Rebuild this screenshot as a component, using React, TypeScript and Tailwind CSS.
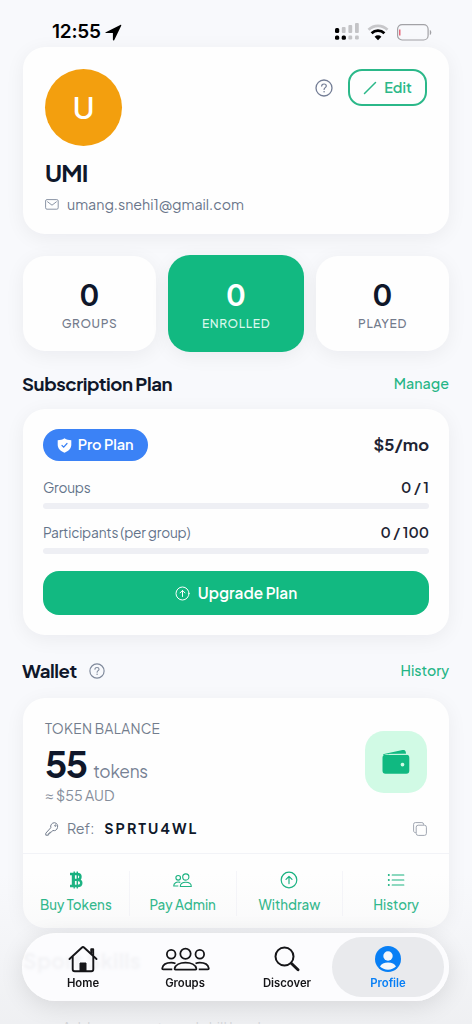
import type { ReactNode } from "react";
import { clsx } from "clsx";

type IconProps = { className?: string };

function HelpIcon({ className }: IconProps) {
  return (
    <svg viewBox="0 0 18 18" fill="none" stroke="currentColor" className={className}>
      <circle cx="9" cy="9" r="8" strokeWidth="1.3" />
      <path d="M6.7 7.1c0-1.3 1-2.1 2.3-2.1s2.3.8 2.3 2c0 1.6-2.2 1.7-2.2 3.4" strokeWidth="1.2" strokeLinecap="round" />
      <circle cx="9.1" cy="12.7" r=".8" fill="currentColor" stroke="none" />
    </svg>
  );
}

function ArrowUpCircle({ className }: IconProps) {
  return (
    <svg viewBox="0 0 18 18" fill="none" stroke="currentColor" strokeWidth="1.2" strokeLinecap="round" strokeLinejoin="round" className={className}>
      <circle cx="9" cy="9" r="7.8" />
      <path d="M9 12.6V5.4M6 8.3l3-3 3 3" />
    </svg>
  );
}

function MailIcon() {
  return (
    <svg viewBox="0 0 14 11" fill="none" stroke="currentColor" strokeWidth="1" className="h-[11px] w-[14px] text-[#8a94a5]">
      <rect x=".6" y=".6" width="12.6" height="9.6" rx="1.4" />
      <path d="M2.6 2.8 7 6.2l4.4-3.4" strokeLinecap="round" strokeLinejoin="round" />
    </svg>
  );
}

function KeyIcon() {
  return (
    <svg viewBox="0 0 14 14" fill="none" stroke="currentColor" strokeWidth="1" strokeLinejoin="round" className="size-[14px]">
      <path d="M9.5.7a3.9 3.9 0 0 0-3.7 5L.8 11.2v2h2.5v-1.5h1.5v-1.4h1.4l1.5-1.8A3.9 3.9 0 1 0 9.5.7Z" />
      <circle cx="10.4" cy="3.6" r=".7" />
    </svg>
  );
}

function CopyIcon() {
  return (
    <svg viewBox="0 0 14 14" fill="none" stroke="currentColor" strokeWidth="1" className="size-[14px]">
      <rect x="3.2" y="3.2" width="10.2" height="10.2" rx="2" />
      <path d="M10.6 3V2.3A1.7 1.7 0 0 0 8.9.6H2.3A1.7 1.7 0 0 0 .6 2.3v6.6c0 .9.8 1.7 1.7 1.7H3" />
    </svg>
  );
}

function WalletIcon() {
  return (
    <svg viewBox="0 0 28 26" fill="#10b981" className="h-[26px] w-7">
      <path d="M2 4.9 20.5 1.1c1.7-.3 3 .3 3.300 2L24 5H6.5C4.6 5 3 5.300 1.500 6.200.9 5.700 1.100 5.200 2 4.900Z" />
      <path fillRule="evenodd" d="M3.500 5.700H24a3 3 0 0 1 3.300 3v13.100a3 3 0 0 1-3 3H3.500a3 3 0 0 1-3-3V8.700a3 3 0 0 1 3-3Zm17 8a1.900 1.900 0 1 0 0 3.800 1.900 1.900 0 0 0 0-3.800Z" />
      <path d="M7.500 5.400 25 5.200" stroke="#d1fae5" strokeWidth="1" strokeLinecap="round" />
    </svg>
  );
}

function BitcoinIcon() {
  return (
    <svg viewBox="0 0 14 18" fill="none" stroke="currentColor" className="h-[18px] w-[14px]">
      <path d="M1 3h7.200c2.200 0 3.300 1.100 3.300 2.800S10.400 8.700 8.400 8.900c2.500.1 3.900 1.300 3.900 3.100 0 2-1.400 3-3.700 3H1M4 3v12M4 8.900h4.500" strokeWidth="2.400" />
      <path d="M5.200.5V17.500M8.300.5V17.500" strokeWidth="1.400" />
    </svg>
  );
}

function PairIcon() {
  return (
    <svg viewBox="0 0 19 15" fill="none" stroke="currentColor" strokeWidth="1.100" strokeLinejoin="round" className="h-[15px] w-[19px]">
      <circle cx="12.800" cy="4" r="3.100" />
      <circle cx="5.200" cy="4.800" r="2.300" />
      <path d="M7.300 13.500c0-2.700 2.200-4.300 5.500-4.300s5.500 1.600 5.500 4.300ZM7.300 9.400C3.500 8.300.7 10 .7 13h4.600" />
    </svg>
  );
}

function ListIcon() {
  return (
    <svg viewBox="0 0 18 14" fill="none" stroke="currentColor" strokeWidth="1.200" strokeLinecap="round" className="h-[14px] w-[18px]">
      <path d="M5.200 2h11.600M5.200 7h11.600M5.200 12h11.600" />
      <path d="M1.800 2h.01M1.800 7h.01M1.800 12h.01" strokeWidth="2" />
    </svg>
  );
}

function HomeIcon() {
  return (
    <svg viewBox="0 0 30 28" fill="none" stroke="currentColor" strokeWidth="1.900" strokeLinecap="round" strokeLinejoin="round" className="h-7 w-[30px]">
      <path d="M1.500 14 13.700 2.700a1.900 1.900 0 0 1 2.600 0L28.500 14" />
      <path d="M4.700 12v12.300c0 1.200.8 2 2 2h16.600c1.200 0 2-.8 2-2V12M25.200 10V4.200h-2V8" />
      <path d="M12 26v-8h6v8Z" fill="currentColor" strokeWidth="1" />
    </svg>
  );
}

function TrioIcon() {
  return (
    <svg viewBox="0 0 50 24" fill="none" stroke="currentColor" strokeWidth="1.800" strokeLinejoin="round" className="h-6 w-[49px]">
      <circle cx="25" cy="6.600" r="5.300" />
      <circle cx="10.400" cy="7.200" r="4.400" />
      <circle cx="39.600" cy="7.200" r="4.400" />
      <path d="M14.800 22.800c-.8 0-1-.5-.8-1.400.8-3.200 5-5.800 11-5.800s10.200 2.600 11 5.800c.2.900 0 1.400-.8 1.400Z" />
      <path d="M11.500 22.600H2.300c-.9 0-1.200-.5-1-1.300.6-3.200 4.200-5.500 9.100-5.500 1.700 0 3.200.3 4.400.8M38.500 22.600h9.200c.9 0 1.200-.5 1-1.300-.6-3.200-4.200-5.500-9.100-5.500-1.700 0-3.200.3-4.400.8" />
    </svg>
  );
}

function StatusBar() {
  return (
    <div className="flex h-[47px] shrink-0 items-start justify-between pt-[22px] pr-[40px] pl-[52px]">
      <div className="flex items-center gap-1 font-['Inter',sans-serif] text-[19px] leading-5 font-semibold tracking-[-0.200px] text-black">
        12:55
        <svg viewBox="0 0 17 17" className="size-[17px]">
          <path d="M.8 8.200 15.300.9c.7-.3 1.200.1.9.9L9.300 16c-.4.800-1.400.6-1.400-.3V9.100H1.200C.3 9.100 0 8.600.8 8.200Z" />
        </svg>
      </div>
      <div className="flex items-center pt-px">
        <svg viewBox="0 0 26 18" fill="#c4c4c7" className="h-[18px] w-[26px]">
          <rect x="1" y="5" width="4.200" height="5" rx="1.500" fill="#000" />
          <rect x="7.800" y="4" width="3.800" height="6" rx="1" />
          <rect x="14.400" y="2" width="3.800" height="8" rx="1" />
          <rect x="21" y="0" width="3.800" height="10" rx="1" />
          <rect x="1" y="12.500" width="4.200" height="4.200" rx="1.500" fill="#000" />
          <rect x="7.700" y="12.500" width="4.200" height="4.200" rx="1.500" fill="#000" />
          <rect x="14.400" y="12.500" width="3.800" height="4" rx="1.200" />
          <rect x="21" y="12.500" width="3.800" height="4" rx="1.200" />
        </svg>
        <svg viewBox="0 0 22 17" fill="none" strokeWidth="2.700" className="ml-[7px] h-[17px] w-[22px]">
          <path d="M1.500 5.800a13.500 13.500 0 0 1 19 0" stroke="#c7c7ca" />
          <path d="M4.600 9.200a9.100 9.100 0 0 1 12.800 0" stroke="#000" />
          <path d="M11 16.200 7.600 12.700a4.900 4.900 0 0 1 6.800 0Z" fill="#000" />
        </svg>
        <svg viewBox="0 0 35 17" fill="none" className="ml-[8px] h-[17px] w-[35px]">
          <rect x=".6" y=".6" width="30.500" height="15.400" rx="4.500" stroke="#a2a2a6" strokeWidth="1.200" />
          <path d="M2.800 5.500v6" stroke="#e0475c" strokeWidth="1.200" />
          <path d="M32.800 6v5c1-.3 1.500-1.300 1.500-2.500S33.800 6.300 32.800 6Z" fill="#a2a2a6" />
        </svg>
      </div>
    </div>
  );
}

function Card({ className, children }: { className?: string; children: ReactNode }) {
  return (
    <div className={clsx("shrink-0 rounded-[22px] shadow-[0_4px_20px_rgba(15,23,42,0.060)]", className)}>{children}</div>
  );
}

function Stat({ value, label, active }: { value: number; label: string; active?: boolean }) {
  return (
    <Card
      className={clsx(
        "flex flex-col items-center",
        active ? "h-[97px] w-[136px] bg-[#12b981] pt-[24px] text-white" : "h-[95px] w-[133px] bg-[#fefefe] pt-[23px] text-[#0f172a]"
      )}
    >
      <span className="font-['Inter',sans-serif] text-[30px] leading-8 font-semibold">{value}</span>
      <span
        className={clsx("mt-[5px] text-[12px] leading-4 font-medium tracking-[0.600px]", active ? "text-[#d9f7ec]" : "text-[#737b8c]")}
      >
        {label}
      </span>
    </Card>
  );
}

function Usage({ label, value }: { label: string; value: string }) {
  return (
    <div className="h-[45px]">
      <div className="flex h-[22px] items-center justify-between">
        <span className="text-[13.700px] tracking-[-0.200px] text-[#64748b]">{label}</span>
        <span className="text-[14.400px] font-semibold text-[#1e2433]">{value}</span>
      </div>
      <div className="mt-1 h-[6px] rounded-full bg-[#eeeff4]" />
    </div>
  );
}

function Action({ label, children }: { label: string; children: ReactNode }) {
  return (
    <div className="flex flex-1 flex-col items-center text-[#16b17f]">
      <div className="flex h-[18px] items-center">{children}</div>
      <span className="mt-[6px] text-[13.400px] leading-5 font-medium">{label}</span>
    </div>
  );
}

function Tab({ label, active, children }: { label: string; active?: boolean; children: ReactNode }) {
  return (
    <div
      className={clsx(
        "flex h-[60px] shrink-0 flex-col items-center rounded-full pt-[7px]",
        active ? "-ml-[6px] w-[112px] bg-[#e9eaed] text-[#087ff5]" : "w-[102px] text-[#151518]"
      )}
    >
      <div className="flex h-[30px] items-center">{children}</div>
      <span className="mt-px font-['Inter',sans-serif] text-[11.300px] leading-4 font-semibold">{label}</span>
    </div>
  );
}

export default function App() {
  return (
    <div className="relative flex h-[1024px] w-[472px] flex-col overflow-hidden bg-[#f8f9fc] font-['Plus_Jakarta_Sans','Inter',sans-serif]">
      <StatusBar />

      <div className="flex flex-col px-[23px]">
        {/* Profile */}
        <Card className="h-[187px] bg-[#fefefe] px-[22px] pt-[22px]">
          <div className="flex items-start justify-between">
            <div className="flex size-[77px] items-center justify-center rounded-full bg-[#f39f0e] pt-px font-['Inter',sans-serif] text-[30px] font-medium text-white">
              U
            </div>
            <div className="flex items-center gap-[15px]">
              <HelpIcon className="size-[18px] text-[#737d95]" />
              <div className="flex h-[37px] w-[79px] items-center justify-center gap-[7px] rounded-[14px] border-2 border-[#2bb889] text-[14.300px] font-semibold text-[#2bb889]">
                <svg viewBox="0 0 14 14" fill="none" stroke="currentColor" strokeWidth="1.500" strokeLinecap="round" className="size-[14px]">
                  <path d="M1.500 12.500 12.500 1.500" />
                </svg>
                Edit
              </div>
            </div>
          </div>
          <h1 className="mt-[11px] text-[23.800px] leading-[30px] font-bold tracking-[-0.800px] text-[#0f172a]">UMI</h1>
          <div className="mt-[7px] flex items-center gap-2 text-[14.250px] leading-5 text-[#69758a]">
            <MailIcon />
            umang.snehi1@gmail.com
          </div>
        </Card>

        {/* Stats */}
        <div className="mt-[21px] flex h-[97px] items-center justify-between">
          <Stat value={0} label="GROUPS" />
          <Stat value={0} label="ENROLLED" active />
          <Stat value={0} label="PLAYED" />
        </div>

        {/* Subscription */}
        <div className="flex h-[57px] items-center justify-between pt-[7px]">
          <h2 className="-ml-px text-[18.600px] font-bold tracking-[-0.450px] text-[#0f172a]">Subscription Plan</h2>
          <span className="text-[14.300px] font-medium text-[#24b585]">Manage</span>
        </div>
        <Card className="h-[226px] bg-[#fefefe] px-5 pt-5">
          <div className="flex h-8 items-center justify-between">
            <div className="flex h-8 w-[105px] items-center justify-center gap-[6px] rounded-full bg-[#3b82f6] pr-px text-[14.500px] font-semibold tracking-[-0.100px] text-white">
              <svg viewBox="0 0 15 15" fill="none" className="size-[15px]">
                <path d="M7.500.3C9.600 1.700 11.700 2.200 14.300 2.300v4.500c0 3.700-2.700 6.300-6.800 7.900C3.400 13.100.7 10.500.7 6.800V2.300C3.300 2.200 5.400 1.700 7.500.3Z" fill="#fff" />
                <path d="m5 7.500 1.700 1.700L10 5.500" stroke="#3b82f6" strokeWidth="1.200" strokeLinecap="round" />
              </svg>
              Pro Plan
            </div>
            <span className="text-[16.600px] font-bold text-[#1e2433]">$5/mo</span>
          </div>
          <div className="pt-4">
            <Usage label="Groups" value="0 / 1" />
            <Usage label="Participants (per group)" value="0 / 100" />
          </div>
          <div className="mt-[4px] flex h-[44px] items-center justify-center gap-2 rounded-2xl bg-[#12b981] pt-px text-[15.300px] font-semibold text-white">
            <ArrowUpCircle className="size-[15px]" />
            Upgrade Plan
          </div>
        </Card>

        {/* Wallet */}
        <div className="flex h-[63px] items-center justify-between pt-[9px]">
          <div className="flex items-center gap-3">
            <h2 className="-ml-px text-[18.600px] font-bold tracking-[-0.450px] text-[#0f172a]">Wallet</h2>
            <HelpIcon className="size-4 text-[#7f899b]" />
          </div>
          <span className="text-[14.200px] font-medium text-[#24b585]">History</span>
        </div>
        <Card className="h-[230px] bg-[#fefefe]">
          <div className="h-[155px] px-[22px] pt-[22px]">
            <div className="flex h-[86px] justify-between">
              <div>
                <div className="text-[13.600px] leading-[18px] tracking-[0.300px] text-[#737d8d]">TOKEN BALANCE</div>
                <div className="flex h-[47px] items-baseline gap-[7px]">
                  <span className="text-[36.500px] leading-[50px] font-bold tracking-[-1.800px] text-[#0f172a]">55</span>
                  <span className="text-[17.300px] tracking-[-0.300px] text-[#768194]">tokens</span>
                </div>
                <div className="text-[14.200px] leading-5 text-[#858d9b]">≈ $55 AUD</div>
              </div>
              <div className="mt-[11px] flex size-[62px] items-center justify-center rounded-[19px] bg-[#d1fae5]">
                <WalletIcon />
              </div>
            </div>
            <div className="mt-[13px] flex h-5 items-center text-[14.300px] text-[#737d8d]">
              <KeyIcon />
              <span className="ml-[8px]">Ref:</span>
              <span className="ml-[10px] font-bold tracking-[2.100px] text-[#10192b]">SPRTU4WL</span>
              <span className="ml-auto text-[#a0a6b1]">
                <CopyIcon />
              </span>
            </div>
          </div>
          <div className="flex h-[75px] divide-x divide-[#f5f5f9] border-t border-[#f2f3f7] pt-[17px] pb-[12px]">
            <Action label="Buy Tokens">
              <BitcoinIcon />
            </Action>
            <Action label="Pay Admin">
              <PairIcon />
            </Action>
            <Action label="Withdraw">
              <ArrowUpCircle className="size-[18px]" />
            </Action>
            <Action label="History">
              <ListIcon />
            </Action>
          </div>
        </Card>

        {/* Next section, scrolled under the tab bar */}
        <div className="mt-[19px] text-[21px] leading-7 font-bold tracking-[0.300px] text-[#0f172a]">Sport Skills</div>
        <div className="mt-[40px] pl-[39px] text-[14.500px] leading-6 text-[#b4b7bd]">Add your sports and skill levels</div>
      </div>

      <div className="pointer-events-none absolute inset-x-0 bottom-0 h-[150px] bg-linear-to-b from-transparent to-[#e9eaec]/60" />
      <nav className="absolute bottom-[23px] left-[22px] flex h-[68px] w-[427px] items-center rounded-full bg-[#fcfcfe]/94 pl-[10px] shadow-[0_5px_24px_rgba(0,0,0,0.110),inset_0_0_2px_rgba(255,255,255,1)] backdrop-blur-[1.500px]">
        <Tab label="Home">
          <HomeIcon />
        </Tab>
        <Tab label="Groups">
          <TrioIcon />
        </Tab>
        <Tab label="Discover">
          <svg viewBox="0 0 26 26" fill="none" stroke="currentColor" strokeLinecap="round" className="size-[26px]">
            <circle cx="10.500" cy="10.500" r="9" strokeWidth="2" />
            <path d="m17.500 17.500 6.500 6.300" strokeWidth="2.900" />
          </svg>
        </Tab>
        <Tab label="Profile" active>
          <svg viewBox="0 0 26 26" fill="currentColor" className="size-[26px]">
            <circle cx="13" cy="13" r="13" />
            <circle cx="13" cy="10" r="4.700" fill="#f4f7fb" />
            <path d="M5 20.500c1.200-2.500 4.200-4 8-4s6.800 1.500 8 4c-2 2-4.800 3.200-8 3.200s-6-1.200-8-3.200Z" fill="#f4f7fb" />
          </svg>
        </Tab>
      </nav>
    </div>
  );
}
